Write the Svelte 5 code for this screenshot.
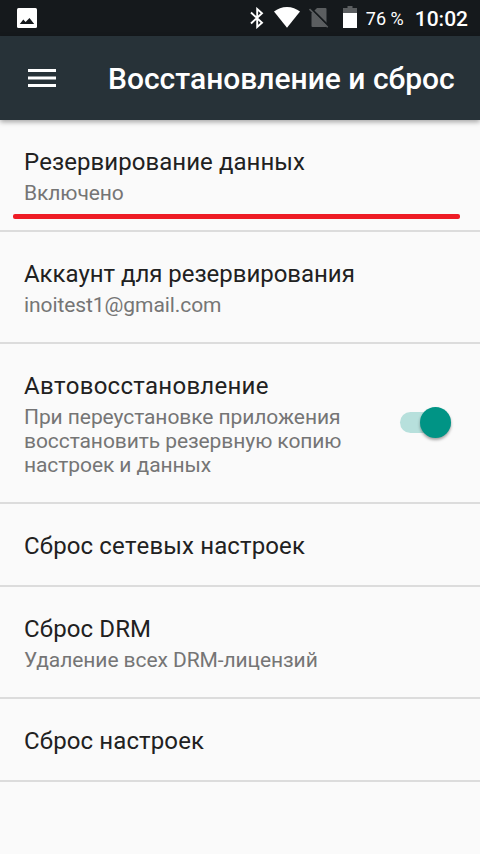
<script lang="ts">
  interface Preference {
    title: string;
    tracking: number;
    summary?: string[];
    toggle?: boolean;
    marked?: boolean;
  }

  const preferences: Preference[] = [
    { title: "Резервирование данных", tracking: 0.05, summary: ["Включено"], marked: true },
    { title: "Аккаунт для резервирования", tracking: -0.04, summary: ["inoitest1@gmail.com"] },
    {
      title: "Автовосстановление",
      tracking: 0.26,
      summary: ["При переустановке приложения", "восстановить резервную копию", "настроек и данных"],
      toggle: true,
    },
    { title: "Сброс сетевых настроек", tracking: 0.13 },
    { title: "Сброс DRM", tracking: 0.12, summary: ["Удаление всех DRM-лицензий"] },
    { title: "Сброс настроек", tracking: 0.12 },
  ];

  let autoRestore = $state(true);
</script>

<div class="screen">
  <div class="status-bar">
    <svg class="picture" width="20" height="20" viewBox="0 0 20 20">
      <rect width="20" height="20" rx="1.5" fill="#fff" />
      <path d="M2.800 16l3.500-4.500 2.300 2.600L12.500 10 17.200 16z" fill="#15191c" />
    </svg>
    <div class="status-right">
      <svg class="bluetooth" width="14" height="22" viewBox="0 0 14 22">
        <path d="M1 5.500l11 10.300L7.200 20V2L12 6.200 1 16.500" fill="none" stroke="#fff" stroke-width="1.900" />
      </svg>
      <svg class="wifi" width="26" height="21" viewBox="0 0 26 21">
        <path d="M0 4.600C3.600 1.700 8 0 13 0s9.400 1.700 13 4.600L13 20.800z" fill="#fff" />
      </svg>
      <svg class="sim" width="20" height="21" viewBox="0 0 20 21">
        <path d="M8 1h8.500a1 1 0 0 1 1 1v17a1 1 0 0 1-1 1H3.500a1 1 0 0 1-1-1V6.500z" fill="#5b5e60" />
        <path d="M1.500 1L20 19.500" stroke="#15191c" stroke-width="2" />
        <path d="M.5 2L18.700 20.200" stroke="#5b5e60" stroke-width="1.600" />
      </svg>
      <svg class="battery" width="14" height="22" viewBox="0 0 14 22">
        <path d="M4.500 0h5v2H14v5H0V2h4.500z" fill="#5b5e60" />
        <path d="M0 7h14v15H0z" fill="#fff" />
      </svg>
      <span class="percent">76 %</span>
      <span class="clock">10:02</span>
    </div>
  </div>

  <header class="toolbar">
    <button class="menu" aria-label="Меню">
      <svg width="28" height="19" viewBox="0 0 28 19">
        <path d="M0 0h28v3H0zM0 7.600h28v3H0zM0 15h28v3H0z" fill="#fff" />
      </svg>
    </button>
    <h1>Восстановление и сброс</h1>
  </header>

  <main>
    {#each preferences as pref}
      <section class="preference">
        <div class="text">
          <div class="title" style:letter-spacing="{pref.tracking}px">{pref.title}</div>
          {#if pref.summary}
            <div class="summary">
              {#each pref.summary as line}
                <div>{line}</div>
              {/each}
            </div>
          {/if}
        </div>
        {#if pref.toggle}
          <button
            class="switch"
            class:on={autoRestore}
            role="switch"
            aria-checked={autoRestore}
            aria-label={pref.title}
            onclick={() => (autoRestore = !autoRestore)}
          >
            <span class="thumb"></span>
          </button>
        {/if}
        {#if pref.marked}
          <span class="mark"></span>
        {/if}
      </section>
    {/each}
  </main>
</div>

<style>
  :global(body) {
    margin: 0;
    background: #fafafa;
  }

  .screen {
    width: 480px;
    height: 854px;
    overflow: hidden;
    background: #fafafa;
    font-family: Roboto, sans-serif;
  }

  .status-bar {
    display: flex;
    align-items: flex-start;
    justify-content: space-between;
    box-sizing: border-box;
    height: 36px;
    padding: 0 12px 0 17px;
    background: #15191c;
    color: #fff;
  }

  .picture {
    margin-top: 8px;
  }

  .status-right {
    display: flex;
    align-items: flex-start;
  }

  .bluetooth {
    margin: 7px 10px 0 0;
  }

  .wifi {
    margin: 7px 9px 0 0;
  }

  .sim {
    margin: 7px 14px 0 0;
  }

  .battery {
    margin: 6px 9px 0 0;
  }

  .percent {
    margin-right: 11px;
    font-size: 18px;
    line-height: 38px;
    white-space: nowrap;
  }

  .clock {
    font-size: 21px;
    font-weight: 500;
    line-height: 38px;
  }

  .toolbar {
    position: relative;
    display: flex;
    align-items: center;
    height: 84px;
    background: #273238;
    box-shadow: 0 2px 5px rgba(0, 0, 0, 0.35);
  }

  .menu {
    display: flex;
    width: 84px;
    padding: 0 28px;
    border: none;
    background: none;
    cursor: pointer;
  }

  h1 {
    margin: 2px 0 0 24px;
    color: #fff;
    font-size: 30px;
    font-weight: 500;
    line-height: 36px;
    white-space: nowrap;
  }

  .preference {
    position: relative;
    display: flex;
    align-items: center;
    justify-content: space-between;
    padding: 28px 29px 25px 24px;
    border-bottom: 2px solid #dcdcdc;
  }

  .title {
    color: #212121;
    font-size: 24px;
    line-height: 28px;
    font-kerning: none;
    white-space: nowrap;
  }

  .summary {
    padding-top: 5px;
    color: #757575;
    font-size: 21px;
    line-height: 24px;
    letter-spacing: -0.08px;
    white-space: nowrap;
  }

  .switch {
    display: flex;
    align-items: center;
    width: 51px;
    height: 21px;
    margin-top: -5px;
    padding: 0;
    border: none;
    border-radius: 11px;
    background: #b9b9b9;
    cursor: pointer;
  }

  .switch.on {
    justify-content: flex-end;
    background: #b7e0dc;
  }

  .thumb {
    width: 31px;
    height: 31px;
    border-radius: 50%;
    background: #f1f1f1;
    box-shadow: 0 2px 3px rgba(0, 0, 0, 0.35);
  }

  .on .thumb {
    background: #009485;
  }

  /* red underline drawn over the first row */
  .mark {
    position: absolute;
    left: 13px;
    right: 20px;
    bottom: 11px;
    height: 5px;
    border-radius: 2px;
    background: #ee1c25;
  }
</style>
